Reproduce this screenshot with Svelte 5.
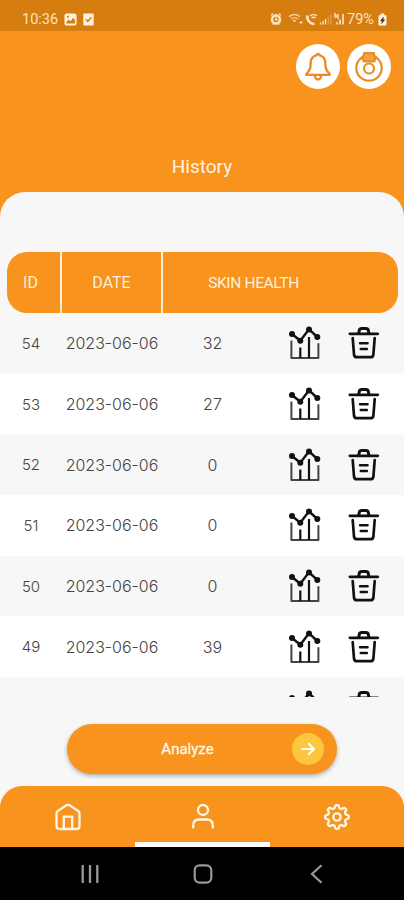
<script>
    let rows = [
        { id: 54, date: '2023-06-06', score: 32 },
        { id: 53, date: '2023-06-06', score: 27 },
        { id: 52, date: '2023-06-06', score: 0 },
        { id: 51, date: '2023-06-06', score: 0 },
        { id: 50, date: '2023-06-06', score: 0 },
        { id: 49, date: '2023-06-06', score: 39 },
        { id: '', date: '', score: '' }
    ]

    // eight rounded teeth around the centre of the settings icon
    function gear(){
        let points = []
        for (let i = 0; i < 96; i++) {
            const a = i / 96 * Math.PI * 2
            const r = 10.4 + 1.5 * Math.tanh(2 * Math.cos(8 * a))
            points.push((14 + r * Math.cos(a)).toFixed(2) + ',' + (14 + r * Math.sin(a)).toFixed(2))
        }
        return points.join(' ')
    }
</script>

<div class="screen">
    <div class="status">
        <span class="time">10:36</span>
        <svg class="picture" width="13" height="13" viewBox="0 0 13 13">
            <rect x="0.5" y="0.5" width="12" height="12" rx="2" fill="#fff3de" />
            <path d="M2.5 10.5V9l2.2-2.4 1.8 1.6 2.7-3.4 1.8 2.4v3.3z" fill="#d67d10" />
            <circle cx="4" cy="3.8" r="1.1" fill="#d67d10" />
        </svg>
        <svg class="check" width="11" height="13" viewBox="0 0 11 13">
            <rect x="0.3" y="0.5" width="10.4" height="12" rx="1" fill="#fff3de" />
            <path d="M2.8 6.3l2 2 3.6-4" fill="none" stroke="#d67d10" stroke-width="1.5" />
        </svg>
        <svg class="signals" width="80" height="14" viewBox="0 0 80 14" fill="none" stroke="#f9e2bd" stroke-width="1.4">
            <circle cx="7" cy="7.4" r="4" stroke-width="2.6" />
            <path d="M7 5.2v2.5h1.8M2 3.2l2.2-1.7M12 3.2L9.8 1.5M3.6 12.4l1-1M10.4 12.4l-1-1" />
            <path d="M20 4.7q5.5-4.4 11 0M22 7q3.5-2.8 7 0M24 9.2q1.5-1.3 3 0" opacity="0.85" />
            <path d="M30.5 10.5h3M32 9v3" stroke-width="1" />
            <path d="M38.5 3.5c-1.2 4 2.5 8.5 7 8.5" stroke-width="2.6" />
            <path d="M41 4q3.5-3 7 0M42.5 6.2q2-1.7 4 0" />
            <path d="M51.5 12.5v-2M54 12.5V9M56.5 12.5V7" />
            <path d="M59.3 12.5V5M61.8 12.5V2.5" opacity="0.35" />
            <path d="M66 6V2l3 4V2" />
            <path d="M68 12.5V10M71 12.5V7.5M74 12.5V2" stroke-width="1.7" />
        </svg>
        <span class="percent">79%</span>
        <svg class="battery" width="9" height="13" viewBox="0 0 9 13">
            <path d="M2.7 0.6h3.6v1.6h1.2a1 1 0 0 1 1 1v8.2a1 1 0 0 1-1 1h-6a1 1 0 0 1-1-1V3.2a1 1 0 0 1 1-1h1.2z" fill="#fff3de" />
            <path d="M5.4 4.2L2.6 7.7h1.7l-.6 2.8 2.9-3.7H4.9z" fill="#3c2a12" stroke="#3c2a12" stroke-width="0.6" />
        </svg>
    </div>

    <header>
        <div class="actions">
            <button class="round" aria-label="Notifications">
                <svg width="28" height="30" viewBox="0 0 28 30" fill="none" stroke="#ec8c1e" stroke-width="2.3" stroke-linejoin="round">
                    <path d="M14 2c-.9 0-1.4.5-1.7 1.400C8.600 4.300 6.700 7.300 6.700 11c0 5.500-1 7.500-4.400 11v.8h23.400v-.8C22.300 18.500 21.300 16.500 21.300 11c0-3.700-1.900-6.700-5.600-7.600C15.400 2.500 14.900 2 14 2z" />
                    <path d="M11 24a3 3.500 0 0 0 6 0" />
                </svg>
            </button>
            <button class="round" aria-label="Device">
                <svg width="30" height="32" viewBox="0 0 30 32" fill="none" stroke="#e98d24" stroke-width="2.200">
                    <circle cx="15" cy="17" r="12.700" />
                    <circle cx="15" cy="17.500" r="5" />
                    <path d="M10 2h10v2.300l2 2.200-1.700 3.800H9.700L8 6.500l2-2.200z" fill="#f3a243" stroke-linejoin="round" />
                </svg>
            </button>
        </div>
        <h1>History</h1>
    </header>

    <main>
        <div class="table">
            <div class="head">
                <div>ID</div>
                <div>DATE</div>
                <div>SKIN HEALTH</div>
            </div>
            {#each rows as row}
                <div class="row">
                    <span class="id">{row.id}</span>
                    <span>{row.date}</span>
                    <span class="score">{row.score}</span>
                    <svg width="34" height="34" viewBox="0 0 34 34" fill="none" stroke="#111">
                        <path d="M4 8l8.300 6.700L21 3.300l8.300 7.700" stroke-width="2.400" />
                        <path d="M3.400 14.500v17.500h27V17.300" stroke="#444" stroke-width="2" stroke-linejoin="round" />
                        <path d="M12.300 21.500v10.500M21 11v21" stroke-width="2.200" />
                        <g fill="#111" stroke="none">
                            <circle cx="4" cy="8" r="3" />
                            <circle cx="12.300" cy="14.700" r="3" />
                            <circle cx="21" cy="3.500" r="3" />
                            <circle cx="29.300" cy="11" r="3" />
                        </g>
                    </svg>
                    <svg width="34" height="34" viewBox="0 0 34 34" fill="none" stroke="#111" stroke-width="2.700" stroke-linecap="round" stroke-linejoin="round">
                        <path d="M2.800 7.800h28" />
                        <path d="M11.700 7.300l.6-3q.4-1.700 2.300-1.700h4.400q1.900 0 2.300 1.700l.6 3" stroke-width="3" />
                        <path d="M5.700 12l1.300 16.500q.3 2.700 3 2.700h13.400q2.700 0 3-2.700L27.700 12" />
                        <path d="M13 17.200h7.600M13.700 23h6.200" stroke-width="2.400" />
                    </svg>
                </div>
            {/each}
        </div>

        <button class="analyze">
            <span class="label">Analyze</span>
            <span class="arrow">
                <svg width="16" height="16" viewBox="0 0 16 16" fill="none" stroke="#fff" stroke-width="2.100" stroke-linecap="round" stroke-linejoin="round">
                    <path d="M2 8h12M8.800 2.800L14 8l-5.200 5.200" />
                </svg>
            </span>
        </button>
    </main>

    <nav>
        <div class="tab">
            <svg width="28" height="28" viewBox="0 0 28 28" fill="none" stroke="#fff7ea" stroke-width="2.300" stroke-linejoin="round">
                <path d="M2.500 10.500Q2.500 9 3.600 8.100L12.800 2q1.200-.8 2.400 0l9.200 6.100q1.100.9 1.100 2.400V23q0 3-3 3h-17q-3 0-3-3z" />
                <path d="M9.800 26V13.700h8.400V26" />
            </svg>
        </div>
        <div class="tab active">
            <svg width="28" height="28" viewBox="0 0 28 28" fill="none" stroke="#fff7ea" stroke-width="2.300" stroke-linecap="round">
                <circle cx="14" cy="7" r="5" />
                <path d="M4.200 24.500v-2q0-6 6-6h7.600q6 0 6 6v2" />
            </svg>
        </div>
        <div class="tab">
            <svg width="28" height="28" viewBox="0 0 28 28" fill="none" stroke="#fff7ea" stroke-width="2.300" stroke-linejoin="round">
                <polygon points={gear()} />
                <circle cx="14" cy="14" r="3.700" />
            </svg>
        </div>
    </nav>

    <footer>
        <svg width="20" height="20" viewBox="0 0 20 20" stroke="#999" stroke-width="2.300">
            <path d="M2.700 1v18M10 1v18M17.300 1v18" />
        </svg>
        <svg width="20" height="20" viewBox="0 0 20 20" fill="none" stroke="#999" stroke-width="2.200">
            <rect x="1.700" y="1.400" width="16.600" height="17.200" rx="5" />
        </svg>
        <svg width="20" height="20" viewBox="0 0 20 20" fill="none" stroke="#999" stroke-width="2.200">
            <path d="M15.500 1.200L6 10l9.500 8.800" />
        </svg>
    </footer>
</div>

<style>
:global(body) {
    margin: 0;
    background: #000;
}
.screen {
    width: 404px;
    height: 900px;
    display: flex;
    flex-direction: column;
    overflow: hidden;
    background: #f8931d;
    font-family: Roboto, "Liberation Sans", sans-serif;
}
button {
    border: 0;
    padding: 0;
    font-family: inherit;
}
svg {
    display: block;
    flex: none;
}
.status {
    height: 31px;
    flex: none;
    box-sizing: border-box;
    padding: 7px 17px 0 22px;
    display: flex;
    align-items: center;
    background: #d67d10;
    color: #fae3c0;
    font-size: 14.5px;
}
.time {
    width: 42px;
}
.check {
    margin-left: 6px;
}
.signals {
    margin-left: auto;
    margin-right: -2px;
}
.percent {
    width: 30px;
    margin-right: 1px;
}
header {
    height: 161px;
    flex: none;
    display: flex;
    flex-direction: column;
}
.actions {
    display: flex;
    justify-content: flex-end;
    gap: 7px;
    padding: 13px 13px 0 0;
}
.round {
    width: 44px;
    height: 45px;
    border-radius: 50%;
    background: #fff;
    display: flex;
    align-items: center;
    justify-content: center;
}
h1 {
    margin: auto 0 13px;
    font-size: 19px;
    line-height: 24px;
    font-weight: 400;
    text-align: center;
    color: #fff3e0;
}
main {
    flex: 1;
    min-height: 0;
    margin-bottom: -30px;
    padding-top: 60px;
    box-sizing: border-box;
    border-radius: 25px 25px 0 0;
    background: #f7f7f7;
    display: flex;
    flex-direction: column;
    align-items: center;
}
.table {
    width: 404px;
    height: 445px;
    flex: none;
    overflow: hidden;
}
.head {
    height: 61px;
    margin: 0 6px 0 7px;
    border-radius: 20px;
    overflow: hidden;
    display: grid;
    grid-template-columns: 53px 99px 1fr;
    gap: 2px;
    background: #fdeedb;
    color: #fff0da;
    font-size: 16px;
}
.head div {
    display: flex;
    align-items: center;
    justify-content: center;
    background: #f8931d;
}
.head div:first-child {
    padding-right: 6px;
}
.head div:last-child {
    padding-right: 54px;
    font-size: 15.5px;
    letter-spacing: -0.35px;
}
.row {
    height: 60.7px;
    display: grid;
    grid-template-columns: 62px 100px 101px 84px 34px;
    align-items: center;
    justify-items: center;
    background: #f7f7f7;
    color: #444;
    font-family: Inter, "Liberation Sans", sans-serif;
    font-size: 16px;
    font-weight: 300;
}
.row:nth-child(odd) {
    background: #fff;
}
.row:last-child {
    background: #f7f7f7;
}
.id {
    font-size: 15px;
}
.analyze {
    width: 270px;
    height: 50px;
    flex: none;
    margin-top: 27px;
    padding: 0 13px 0 0;
    box-sizing: border-box;
    border-radius: 25px;
    background: #f8931d;
    box-shadow: 0 2px 4px rgba(0, 0, 0, 0.3);
    display: flex;
    align-items: center;
    color: #fff6e8;
    font-size: 15px;
}
.label {
    flex: 1;
    padding-left: 16px;
    -webkit-text-stroke: 0.3px #fff6e8;
}
.arrow {
    width: 32px;
    height: 32px;
    border-radius: 50%;
    background: #fcc73f;
    display: flex;
    align-items: center;
    justify-content: center;
}
nav {
    height: 61px;
    flex: none;
    border-radius: 22px 22px 0 0;
    background: #f8931d;
    display: grid;
    grid-template-columns: 135px 135px 134px;
    z-index: 1;
}
.tab {
    box-sizing: border-box;
    padding-top: 17px;
    display: flex;
    justify-content: center;
    border-bottom: 5px solid transparent;
}
.active {
    border-color: #fff;
}
footer {
    height: 53px;
    flex: none;
    z-index: 1;
    background: #000;
    display: grid;
    grid-template-columns: 180px 45px 182px;
    align-items: center;
    justify-items: center;
}
</style>
